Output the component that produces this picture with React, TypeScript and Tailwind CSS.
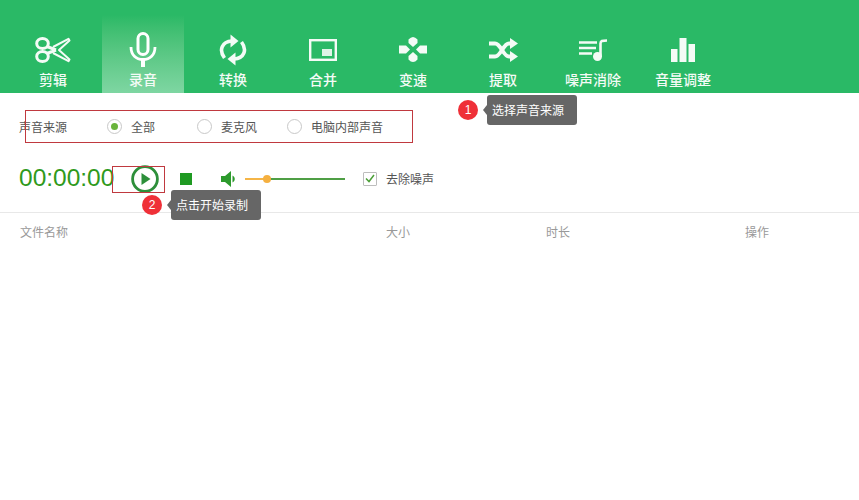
const FONT = "font-['Noto_Sans_CJK_SC',sans-serif]";

function Scissors() {
  return (
    <svg width="36" height="26" viewBox="0 0 36 26" fill="none" stroke="#f4fbf6" strokeWidth="3">
      <ellipse cx="7.5" cy="6.5" rx="5.8" ry="5" />
      <ellipse cx="7.5" cy="19.5" rx="5.8" ry="5" />
      <path d="M12 9.5 L21 13 M12 16.5 L21 13" strokeWidth="3" />
      <path d="M18 10 L33.5 1.8 L34.5 3.5 L24 13 L34.5 22.5 L33.5 24.2 L18 16" strokeWidth="2" strokeLinejoin="round" />
    </svg>
  );
}
function Mic() {
  return (
    <svg width="28" height="35" viewBox="0 0 28 35" fill="none" stroke="white">
      <rect x="9" y="1.5" width="10" height="21" rx="5" strokeWidth="3" />
      <path d="M2 15 C2 23 7 27.5 14 27.5 C21 27.5 26 23 26 15" strokeWidth="2.8" />
      <path d="M14 28 V35" strokeWidth="4" />
    </svg>
  );
}
function Convert() {
  return (
    <svg width="28" height="32" viewBox="0 0 28 32" fill="none" stroke="#f4fbf6" strokeWidth="3.6">
      <path d="M5.5 24 C-0.5 16 3 7.5 13 7" />
      <path d="M22.5 8 C28.5 16 25 24.5 15 25" />
      <path d="M11.5 0.5 L19.5 7 L11.5 13.5 Z" fill="#f4fbf6" strokeWidth="0" />
      <path d="M16.5 18.5 L8.5 25 L16.5 31.5 Z" fill="#f4fbf6" strokeWidth="0" />
    </svg>
  );
}
function Merge() {
  return (
    <svg width="28" height="22" viewBox="0 0 28 22">
      <rect x="1.2" y="1.2" width="25.6" height="19.6" fill="none" stroke="#f4fbf6" strokeWidth="2.4" />
      <rect x="13" y="10" width="10" height="7" fill="#dff4e7" />
    </svg>
  );
}
function Speed() {
  return (
    <svg width="28" height="27" viewBox="0 0 28 27" fill="#f4fbf6">
      <path d="M9.5 3.5 Q14 -1.5 18.5 3.5 V7 L14 11 L9.5 7 Z" />
      <path d="M9.5 23.5 Q14 28.5 18.5 23.5 V20 L14 16 L9.5 20 Z" />
      <path d="M0 9.5 V17.5 H7 L11 13.5 L7 9.5 Z" />
      <path d="M28 9.5 V17.5 H21 L17 13.5 L21 9.5 Z" />
    </svg>
  );
}
function Extract() {
  return (
    <svg width="29" height="24" viewBox="0 0 29 24" fill="none" stroke="#f4fbf6" strokeWidth="3.8">
      <path d="M0 5.5 H6 C12 5.5 14 18.5 20 18.5 H23" />
      <path d="M0 18.5 H6 C12 18.5 14 5.5 20 5.5 H23" />
      <path d="M21 0 L29 5.5 L21 11 Z" fill="#f4fbf6" strokeWidth="0" />
      <path d="M21 13 L29 18.5 L21 24 Z" fill="#f4fbf6" strokeWidth="0" />
    </svg>
  );
}
function Denoise() {
  return (
    <svg width="28" height="22" viewBox="0 0 28 22" fill="none" stroke="#f4fbf6">
      <path d="M0 3.5 H18 M0 9 H17 M0 14.5 H13" strokeWidth="2.4" />
      <circle cx="18.5" cy="17.5" r="4.5" fill="#f4fbf6" strokeWidth="0" />
      <path d="M21.5 18 V4.5 C21.5 2 23 1.5 28 1.5" strokeWidth="2.6" />
    </svg>
  );
}
function Volume() {
  return (
    <svg width="24" height="24" viewBox="0 0 24 24" fill="#f4fbf6">
      <rect x="0" y="11" width="6.5" height="13" />
      <rect x="8.5" y="0" width="7" height="24" />
      <rect x="17.5" y="6" width="6.5" height="18" />
    </svg>
  );
}

const tools = [
  { label: "剪辑", icon: <Scissors /> },
  { label: "录音", icon: <Mic />, active: true },
  { label: "转换", icon: <Convert /> },
  { label: "合并", icon: <Merge /> },
  { label: "变速", icon: <Speed /> },
  { label: "提取", icon: <Extract /> },
  { label: "噪声消除", icon: <Denoise /> },
  { label: "音量调整", icon: <Volume /> },
];

function Radio({ label, checked, className }: { label: string; checked?: boolean; className: string }) {
  return (
    <div className={`flex items-center ${className}`}>
      <span className="w-[15px] h-[15px] rounded-full border border-[#c8c8c8] flex items-center justify-center bg-white">
        {checked && <span className="w-[7px] h-[7px] rounded-full bg-[#6ab43c]" />}
      </span>
      <span className="ml-[9px] text-[12px] leading-none text-[#555]">{label}</span>
    </div>
  );
}

function Tip({ n, text, className }: { n: number; text: string; className: string }) {
  return (
    <div className={`absolute flex items-center ${className}`}>
      <span className="w-[20px] h-[20px] rounded-full bg-[#ef3038] text-white text-[12px] flex items-center justify-center font-['Liberation_Sans',sans-serif]">
        {n}
      </span>
      <span className="ml-[5px] w-0 h-0 border-y-[5px] border-y-transparent border-r-[4px] border-r-[#666]" />
      <span className="w-[90px] h-[30px] rounded-[3px] bg-[#666] text-white text-[12px] flex items-center pl-[5px]">
        {text}
      </span>
    </div>
  );
}

export default function App() {
  return (
    <div className={`relative w-[859px] h-[500px] bg-white overflow-hidden ${FONT}`}>
      <header className="h-[93px] bg-[#2ab966] flex items-end pl-[12px] gap-[8px]">
        {tools.map((t) => (
          <div
            key={t.label}
            className={`w-[82px] h-[78px] flex flex-col items-center ${
              t.active ? "bg-gradient-to-b from-[#2ab966] to-[#7ed6a2]" : ""
            }`}
          >
            <div className="h-[55px] flex items-center justify-center pt-[14px]">{t.icon}</div>
            <span className="text-[14px] leading-[18px] font-medium text-[#f4fbf6]">{t.label}</span>
          </div>
        ))}
      </header>

      <div className="h-[67px] pl-[19px] flex items-center">
        <span className="w-[88px] text-[12px] text-[#555] leading-none">声音来源</span>
        <Radio label="全部" checked className="w-[90px]" />
        <Radio label="麦克风" className="w-[90px]" />
        <Radio label="电脑内部声音" className="" />
      </div>

      <div className="h-[53px] pb-[15px] pl-[19px] flex items-center border-b border-[#e8e8e8]">
        <span className="w-[112px] text-[24.5px] leading-none text-[#2f9a1c] font-['Liberation_Sans',sans-serif]">
          00:00:00
        </span>
        <svg width="28" height="28" viewBox="0 0 28 28" fill="none">
          <circle cx="14" cy="14" r="12.4" stroke="#2d8f3a" strokeWidth="2.8" />
          <path d="M10.5 8 L19.5 14 L10.5 20 Z" fill="#2d8f3a" />
        </svg>
        <span className="ml-[21px] w-[12px] h-[12px] bg-[#1f9a22]" />
        <svg className="ml-[29px]" width="16" height="16" viewBox="0 0 16 16" fill="#2d9a2d">
          <path d="M0 5 H4 L10 0 V16 L4 11 H0 Z" />
          <path d="M11.5 4.5 C14.5 6 14.5 10 11.5 11.5 Z" />
        </svg>
        <div className="ml-[8px] w-[100px] h-[2px] flex">
          <span className="w-[22px] bg-[#f5b547]" />
          <span className="flex-1 bg-[#4f9f45]" />
        </div>
        <span className="ml-[18px] w-[14px] h-[14px] border border-[#bdbdbd] rounded-[1px] flex items-center justify-center">
          <svg width="10" height="9" viewBox="0 0 10 9" fill="none">
            <path d="M1 4.5 L4 7.5 L9 1" stroke="#4c9f38" strokeWidth="1.5" />
          </svg>
        </span>
        <span className="ml-[9px] text-[12px] text-[#555] leading-none">去除噪声</span>
      </div>

      <div className="grid grid-cols-[366px_160px_199px_1fr] pl-[20px] pt-[11px] text-[12px] leading-[16px] text-[#999]">
        <span>文件名称</span>
        <span>大小</span>
        <span>时长</span>
        <span>操作</span>
      </div>

      <span className="absolute left-[263px] top-[175px] w-[8px] h-[8px] rounded-full bg-[#f5b040]" />
      <span className="absolute left-[25px] top-[110px] w-[388px] h-[33px] border border-[#c0393f]" />
      <span className="absolute left-[112px] top-[166px] w-[53px] h-[27px] border border-[#c0393f]" />
      <Tip n={1} text="选择声音来源" className="left-[458px] top-[95px]" />
      <Tip n={2} text="点击开始录制" className="left-[142px] top-[190px]" />
    </div>
  );
}
